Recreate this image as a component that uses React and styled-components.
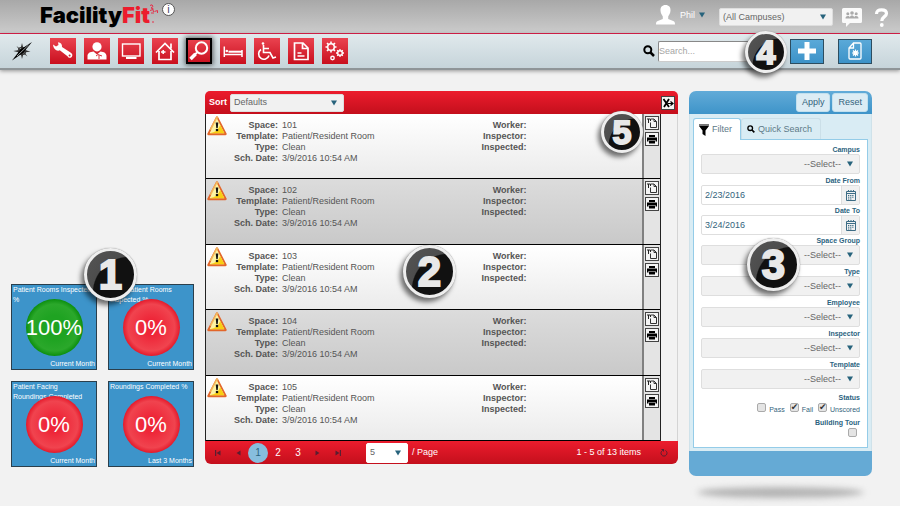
import styled, { createGlobalStyle, css } from 'styled-components';

const navItems = [
  'wrench',
  'person',
  'monitor',
  'house',
  'magnifier',
  'bed',
  'wheelchair',
  'report',
  'gears',
];

const tiles = [
  { title: 'Patient Rooms Inspected %', value: '100%', period: 'Current Month', good: true },
  { title: 'EVS Patient Rooms Inspected %', value: '0%', period: 'Current Month' },
  { title: 'Patient Facing\nRoundings Completed', value: '0%', period: 'Current Month' },
  { title: 'Roundings Completed %', value: '0%', period: 'Last 3 Months' },
];

const spaces = ['101', '102', '103', '104', '105'];

const filters = [
  { id: 'campus', label: 'Campus' },
  { id: 'from', label: 'Date From', date: '2/23/2016' },
  { id: 'to', label: 'Date To', date: '3/24/2016' },
  { id: 'group', label: 'Space Group' },
  { id: 'type', label: 'Type' },
  { id: 'employee', label: 'Employee' },
  { id: 'inspector', label: 'Inspector' },
  { id: 'template', label: 'Template' },
];

const navGlyphs = {
  wrench: (
    <g fill='#fff'>
      <path d='M3 6.5 6 8.5 8.5 7 8 4.3C11 4.6 12.3 6.6 12 9L20.5 14.5C23.5 16 22.6 20 19.5 19.8 18.5 19.7 18 19 17.5 18.2L9.8 12.3C7 13.6 3.5 11.5 3 6.5Z' />
      <circle cx='19.6' cy='17.4' r='1' fill='#d02634' />
    </g>
  ),
  person: (
    <g fill='#fff'>
      <circle cx='13' cy='8.8' r='4.6' />
      <path d='M3.5 21.5V18c0-3 2.5-4.4 6-4.6l3.5 3 3.5-3c3.5.2 6 1.6 6 4.6v3.5Z' />
      <path d='M12 18l2-1.5 4 1.5M15 17v4' stroke='#d8303d' fill='none' />
    </g>
  ),
  monitor: (
    <g fill='none' stroke='#fff' strokeWidth='1.4'>
      <rect x='4.5' y='6' width='17.5' height='12' />
      <path d='M8 20h10.5' strokeWidth='2' />
    </g>
  ),
  house: (
    <g fill='none' stroke='#fff' strokeWidth='1.7'>
      <path d='M4 14.5 13 5.5l9 9M19 10.5V5.5M7 13v8.5h12V13' />
      <path d='M9 14h4.5M11.2 12v4' strokeWidth='1.5' />
    </g>
  ),
  magnifier: (
    <g fill='none' stroke='#fff'>
      <circle cx='15.5' cy='10' r='5.7' strokeWidth='2' />
      <path d='M11 14.5 8.5 17' strokeWidth='2' />
      <path d='M9.5 16 4.5 21' strokeWidth='3.5' />
    </g>
  ),
  bed: (
    <g fill='none' stroke='#fff' strokeWidth='1.5'>
      <path d='M4.3 8.5v10.5M22 12v7M4 16.5h18' />
      <path d='M8.5 13.7H22' strokeWidth='2' />
      <circle cx='6.8' cy='13' r='1.3' fill='#fff' stroke='none' />
    </g>
  ),
  wheelchair: (
    <g fill='none' stroke='#fff' strokeWidth='1.6'>
      <circle cx='9' cy='5.5' r='1.3' fill='#fff' stroke='none' />
      <path d='M9.5 7v7.5h6.5l3 5.5 3-1M10 10.5h5' />
      <path d='M7 11.5a5.3 5.3 0 1 0 8 6' />
    </g>
  ),
  report: (
    <g fill='none' stroke='#fff' strokeWidth='1.7'>
      <path d='M6.5 5H15l5 5v11.5H6.5ZM14.5 5v5.5H20' />
      <path d='M9.5 15h4M9.5 18h7' />
    </g>
  ),
  gears: (
    <g fill='none' stroke='#fff'>
      <circle cx='9' cy='9' r='3.3' strokeWidth='1.5' />
      <circle cx='18' cy='15' r='2.3' strokeWidth='1.4' />
      <circle cx='10.5' cy='20' r='1.7' strokeWidth='1.4' />
      <path
        d='M9 3.5v2M9 12.5v2M3.5 9h2M12.5 9h2M5 5l1.5 1.5M13 5l-1.5 1.5M5 13l1.5-1.5M13 13l-1.5-1.5'
        strokeWidth='1.6'
      />
      <path
        d='M18 11v1.5M18 17.5V19M14 15h1.5M20.5 15H22M15.2 12.2l1 1M20.8 12.2l-1 1M15.2 17.8l1-1M20.8 17.8l-1-1'
        strokeWidth='1.3'
      />
    </g>
  ),
};

function Caret() {
  return (
    <svg width='6' height='6' viewBox='0 0 6 6' aria-hidden='true'>
      <path d='M0 .5h6L3 5.5Z' fill='#27637c' />
    </svg>
  );
}

function SearchGlyph({ size }) {
  return (
    <svg width={size} height={size} viewBox='0 0 12 12' aria-hidden='true'>
      <circle cx='4.8' cy='4.8' r='3.5' fill='none' stroke='#000' strokeWidth='2' />
      <path d='M7.5 7.5 11 11' stroke='#000' strokeWidth='2.5' />
    </svg>
  );
}

function WarningIcon() {
  return (
    <svg width='20' height='20' viewBox='0 0 20 20' aria-label='Warning'>
      <path
        d='M10 1.5 18.5 18H1.5Z'
        fill='#fbe36a'
        stroke='#e2662a'
        strokeWidth='2.4'
        strokeLinejoin='round'
      />
      <path d='M10 1.5 4 13' stroke='#f3b65a' strokeWidth='2' strokeLinecap='round' />
      <path d='M10 2.6 17.4 17.2H2.6Z' fill='#fdf3a2' />
      <path d='M13.2 9 17.4 17.2H2.6Q11 16 13.2 9Z' fill='#f8cf12' />
      <path d='M8.7 6.5h2.6l-.6 5.5H9.3Z' fill='#111' />
      <circle cx='10' cy='14' r='1.3' fill='#111' />
    </svg>
  );
}

function PagerGlyph({ kind }) {
  const back = kind === 'first' || kind === 'prev';
  const bar = kind === 'first' || kind === 'last';
  return (
    <svg width='6' height='6' viewBox='0 0 6 6' aria-hidden='true'>
      <g transform={back ? 'rotate(180 3 3)' : undefined} fill='#5a1f31'>
        <path d='M.5.5 4.5 3 .5 5.5Z' />
        {bar && <path d='M4.8 0H6v6H4.8Z' />}
      </g>
    </svg>
  );
}

function Select({ id, label, children, ...rest }) {
  return (
    <SelectBox {...rest}>
      <select id={id} aria-label={label}>
        <option>{children}</option>
      </select>
      <Caret />
    </SelectBox>
  );
}

function AppHeader() {
  return (
    <TopBar>
      <Logo>
        Facility<span>Fit</span>
        <svg width='8' height='20' viewBox='0 0 8 20' aria-hidden='true'>
          <path
            d='M0 1.5 2 .8 3 2.5 1 4 3.5 5M0 6.5 3 5.5 3.5 8M4.5 7.5 7.5 6.5 7.5 9M1 9h3M2 18h2'
            fill='none'
            stroke='#e5304a'
          />
        </svg>
      </Logo>
      <InfoButton type='button'>i</InfoButton>
      <UserButton type='button'>
        <svg width='19' height='20' viewBox='0 0 19 20' aria-hidden='true'>
          <path
            fill='#fff'
            d='M9.5 0C13 0 14.7 2.3 14.5 5.5 14.4 8.5 13 10 12.2 11.5V14l5 2c1.5.7 1.8 1.7 1.8 3.5H0c0-1.8.3-2.8 1.8-3.5l5-2v-2.5C6 10 4.6 8.5 4.5 5.5 4.3 2.3 6 0 9.5 0Z'
          />
        </svg>
        Phil
        <Caret />
      </UserButton>
      <Select label='Campus' $width='114px'>
        (All Campuses)
      </Select>
      <IconLink href='#chat' aria-label='Messages'>
        <svg width='20' height='19' viewBox='0 0 20 19'>
          <path
            d='M1.5 0h17A1.5 1.5 0 0 1 20 1.5v12a1.5 1.5 0 0 1-1.5 1.5H8l-4 4V15H1.5A1.5 1.5 0 0 1 0 13.5v-12A1.5 1.5 0 0 1 1.5 0Z'
            fill='#fafafa'
          />
          <g fill='#aaa'>
            <circle cx='5.8' cy='5.8' r='1.5' />
            <circle cx='10' cy='5' r='1.8' />
            <circle cx='14.2' cy='5.8' r='1.5' />
            <path d='M3.5 10.5c0-3 4-3 4.3-1 .6-2.6 3.8-2.6 4.4 0 .3-2 4.3-2 4.3 1Z' />
          </g>
        </svg>
      </IconLink>
      <IconLink href='#help' aria-label='Help'>
        <svg width='15' height='19' viewBox='0 0 15 19'>
          <path
            d='M2.5 6C2.5 3 4.5 1.8 7.5 1.8S12.5 3.2 12.5 5.5C12.5 8.8 7.8 8.6 7.8 13'
            fill='none'
            stroke='#fff'
            strokeWidth='3.2'
          />
          <circle cx='7.8' cy='17' r='1.9' fill='#fff' />
        </svg>
      </IconLink>
    </TopBar>
  );
}

function ActionBar() {
  return (
    <Toolbar>
      <Compass href='#home' aria-label='Navigator'>
        <svg width='20' height='20' viewBox='0 0 20 20'>
          <circle cx='10' cy='10' r='4' fill='none' stroke='#444' />
          <path
            d='M10 2l1.5 6 4-3.5L12.5 9l6 1.5-6 1 3 4-4-3L10 18l-1.2-5.5-4 2.5 2.5-3.5-6-1.5 6-1L4.5 5l4 3Z'
            fill='#333'
          />
          <path d='M20 1 11.5 11.5 0 19.5 8.5 8.5Z' fill='#000' />
          <path d='M16.5 4 5 15' stroke='#dce4e8' strokeWidth='.7' />
        </svg>
      </Compass>
      <Nav>
        {navItems.map((name) => (
          <NavButton key={name} type='button' aria-label={name} $active={name === 'magnifier'}>
            <svg width='26' height='26' viewBox='0 0 26 26'>
              {navGlyphs[name]}
            </svg>
          </NavButton>
        ))}
      </Nav>
      <Search>
        <SearchGlyph size={12} />
        <input type='text' placeholder='Search...' aria-label='Search' />
      </Search>
      <BlueButton type='button' aria-label='Add'>
        <svg width='18' height='18' viewBox='0 0 18 18'>
          <path d='M9 0v18M0 9h18' stroke='#fff' strokeWidth='5' />
        </svg>
      </BlueButton>
      <BlueButton type='button' aria-label='Report settings'>
        <svg width='14' height='18' viewBox='0 0 14 18'>
          <path
            d='M5.5 1H12q1 0 1 1v14q0 1-1 1H2q-1 0-1-1V6ZM5.5 1v5H1'
            fill='none'
            stroke='#fff'
            strokeWidth='1.3'
          />
          <circle cx='7.5' cy='11' r='2.3' fill='#fff' />
          <path d='M7.5 7.5v7M4 11h7M5 8.5l5 5M10 8.5l-5 5' stroke='#fff' strokeWidth='1.2' />
        </svg>
      </BlueButton>
      <Badge $small $left='745px' $top='-3px'>
        4
      </Badge>
    </Toolbar>
  );
}

function TileBoard() {
  return (
    <Tiles>
      {tiles.map((tile) => (
        <Tile key={tile.title}>
          <TileTitle>{tile.title}</TileTitle>
          <Gauge $good={tile.good}>{tile.value}</Gauge>
          <Period>{tile.period}</Period>
        </Tile>
      ))}
      <Badge $left='73px' $top='157px'>
        1
      </Badge>
    </Tiles>
  );
}

function SpaceRow({ space }) {
  return (
    <Row>
      <WarningIcon />
      <Details>
        <dt>Space:</dt>
        <dd>{space}</dd>
        <dt>Template:</dt>
        <dd>Patient/Resident Room</dd>
        <dt>Type:</dt>
        <dd>Clean</dd>
        <dt>Sch. Date:</dt>
        <dd>3/9/2016 10:54 AM</dd>
      </Details>
      <Details>
        <dt>Worker:</dt>
        <dd />
        <dt>Inspector:</dt>
        <dd />
        <dt>Inspected:</dt>
        <dd />
      </Details>
      <Actions>
        <MiniButton type='button' aria-label='Open inspection'>
          <svg width='12' height='12' viewBox='0 0 12 12'>
            <path d='M5 2h3l2.5 2.5V10.5H4.5V5.5M8 2v2.5h2.5' fill='none' stroke='#333' />
            <path d='M1 2h3.5v2M2.5 2v4' fill='none' stroke='#222' />
          </svg>
        </MiniButton>
        <MiniButton type='button' aria-label='Print'>
          <svg width='12' height='12' viewBox='0 0 12 12'>
            <path d='M3 2h6v2H3ZM1 4.5h10v4H9.5V7h-7v1.5H1ZM3 7.5h6v3H3Z' fill='#000' />
          </svg>
        </MiniButton>
      </Actions>
    </Row>
  );
}

function Inspections() {
  return (
    <Panel>
      <PanelHead>
        <label htmlFor='sort'>Sort</label>
        <Select id='sort' $width='114px'>
          Defaults
        </Select>
        <MiniButton type='button' aria-label='Export to Excel' $end>
          <svg width='12' height='12' viewBox='0 0 12 12'>
            <path d='M1.5 2 7 10M7 2 2 10' stroke='#000' strokeWidth='1.8' />
            <path
              d='M5.5 6.5h5M8.5 4.5l2.5 2-2.5 2'
              stroke='#000'
              strokeWidth='1.2'
              fill='none'
            />
          </svg>
        </MiniButton>
      </PanelHead>
      <Scroller>
        <Rows>
          {spaces.map((space) => (
            <SpaceRow key={space} space={space} />
          ))}
        </Rows>
      </Scroller>
      <Pager>
        <Page type='button' aria-label='First page'>
          <PagerGlyph kind='first' />
        </Page>
        <Page type='button' aria-label='Previous page'>
          <PagerGlyph kind='prev' />
        </Page>
        <Page type='button' $current>
          1
        </Page>
        <Page type='button'>2</Page>
        <Page type='button'>3</Page>
        <Page type='button' aria-label='Next page'>
          <PagerGlyph kind='next' />
        </Page>
        <Page type='button' aria-label='Last page'>
          <PagerGlyph kind='last' />
        </Page>
        <PageSize>
          <Select id='size' $width='42px' $tall $plain>
            5
          </Select>
          <label htmlFor='size'>/ Page</label>
        </PageSize>
        <Count>1 - 5 of 13 items</Count>
        <Refresh type='button' aria-label='Refresh'>
          <svg width='8' height='8' viewBox='0 0 8 8'>
            <path d='M5.5 1.5a3 3 0 1 1-3 0' fill='none' stroke='#5a1f31' />
            <path d='M1 0h3v3Z' fill='#5a1f31' />
          </svg>
        </Refresh>
      </Pager>
      <Badge $left='198px' $top='154px'>
        2
      </Badge>
      <Badge $small $left='396px' $top='20px'>
        5
      </Badge>
    </Panel>
  );
}

function FilterPanel() {
  return (
    <Side>
      <FilterBox>
        <FilterHead>
          <button type='button'>Apply</button>
          <button type='reset'>Reset</button>
        </FilterHead>
        <FilterBody>
          <Tabs>
            <Tab type='button' $active>
              <svg width='10' height='12' viewBox='0 0 10 12' aria-hidden='true'>
                <path d='M0 0h10v2L6.5 6.5V12l-3-2V6.5L0 2Z' fill='#000' />
                <path d='M0 1h10' stroke='#777' strokeWidth='2' />
              </svg>
              Filter
            </Tab>
            <Tab type='button'>
              <SearchGlyph size={8} />
              Quick Search
            </Tab>
          </Tabs>
          <Fields>
            {filters.map(({ id, label, date }) => (
              <Field key={id} $date={date}>
                <label htmlFor={id}>{label}</label>
                {date ? (
                  <DateBox>
                    <input id={id} type='text' defaultValue={date} />
                    <button type='button' aria-label={`Pick ${label}`}>
                      <svg width='10' height='11' viewBox='0 0 10 11'>
                        <path d='M.5 1.5h9v9h-9ZM.5 3.5h9' fill='none' stroke='#3c6c85' />
                        <path d='M2.5 0v2M5 0v2M7.5 0v2' stroke='#3c6c85' />
                        <path
                          d='M2 5.5h6M2 7.2h6M2 9h4'
                          stroke='#3c6c85'
                          strokeDasharray='1.3 .8'
                        />
                      </svg>
                    </button>
                  </DateBox>
                ) : (
                  <Select id={id} $width='100%' $tall $right>
                    --Select--
                  </Select>
                )}
              </Field>
            ))}
            <Legend>Status</Legend>
            <Checks>
              <label>
                <input type='checkbox' /> Pass
              </label>
              <label>
                <input type='checkbox' defaultChecked /> Fail
              </label>
              <label>
                <input type='checkbox' defaultChecked /> Unscored
              </label>
            </Checks>
            <Legend as='label' htmlFor='tour'>
              Building Tour
            </Legend>
            <Checks $single>
              <input id='tour' type='checkbox' />
            </Checks>
          </Fields>
        </FilterBody>
        <FilterFoot />
      </FilterBox>
      <GroundShadow />
      <Badge $left='58px' $top='147px'>
        3
      </Badge>
    </Side>
  );
}

function App() {
  return (
    <>
      <GlobalStyle />
      <AppHeader />
      <ActionBar />
      <Main>
        <TileBoard />
        <Inspections />
        <FilterPanel />
      </Main>
    </>
  );
}

// -------------------------------------------------- styling ----------------------------------------------
const GlobalStyle = createGlobalStyle`
  * {
    box-sizing: border-box;
  }

  body {
    margin: 0;
    min-height: 100vh;
    background-color: #f2f2f2;
    color: #555;
    font: 9px/11px 'Liberation Sans', Arial, sans-serif;
  }

  button,
  input,
  select {
    margin: 0;
    padding: 0;
    border: 0;
    outline: 0;
    background: none;
    color: inherit;
    font: inherit;
  }

  svg {
    display: block;
    flex: none;
  }

  ul,
  dl,
  dd {
    margin: 0;
    padding: 0;
    list-style: none;
  }
`;

const redGradient = css`
  background-image: linear-gradient(#ec1c2d, #c40f1c);
`;

const SelectBox = styled.div`
  display: flex;
  align-items: center;
  width: ${({ $width }) => $width};
  height: ${({ $tall }) => ($tall ? '20px' : '18px')};
  padding: 0 6px 0 3px;
  border: 1px solid ${({ $plain }) => ($plain ? '#fff' : '#dedede')};
  border-radius: 2px;
  background-color: ${({ $plain }) => ($plain ? '#fff' : '#f1f1f1')};

  select {
    flex: 1;
    min-width: 0;
    height: 100%;
    margin-right: ${({ $right }) => ($right ? '6px' : 0)};
    appearance: none;
    color: #666;
    text-align-last: ${({ $right }) => ($right ? 'right' : 'left')};
  }
`;

const TopBar = styled.header`
  display: flex;
  align-items: flex-start;
  height: 34px;
  padding: 0 11px 0 40px;
  border-bottom: 1px solid #e0204c;
  background-image: linear-gradient(#a8a8a8, #cbcbcb);

  > * {
    flex: none;
  }

  ${SelectBox} {
    margin-top: 8px;
  }
`;

const Logo = styled.div`
  display: flex;
  color: #000;
  font: 900 22px/30px Inter, sans-serif;

  span {
    color: #ec1c2d;
  }

  svg {
    margin-top: 4px;
  }
`;

const InfoButton = styled.button`
  width: 13px;
  height: 13px;
  margin: 3px auto 0 4px;
  border: 1px solid #555;
  border-radius: 50%;
  background-color: #fff;
  color: #446;
  font: 11px/11px 'Liberation Sans', sans-serif;
`;

const UserButton = styled.button`
  display: flex;
  align-items: flex-start;
  margin: 5px 14px 0 0;
  color: #fff;
  line-height: 20px;

  svg:first-child {
    margin-right: 5px;
  }

  svg:last-child {
    margin: 7px 0 0 4px;
  }
`;

const IconLink = styled.a`
  margin: 8px 0 0 9px;

  & + & {
    margin-left: 12px;
  }
`;

const Toolbar = styled.div`
  position: relative;
  display: flex;
  align-items: center;
  height: 36px;
  padding: 0 28px 0 12px;
  border-bottom: 2px solid #8f9598;
  background-image: linear-gradient(#e0e9ec, #c6d4da);
  box-shadow: 0 1px 4px rgba(0, 0, 0, 0.4);
`;

const Compass = styled.a`
  margin-right: 18px;
`;

const Nav = styled.nav`
  display: flex;
  gap: 8px;
  margin-right: auto;
`;

const NavButton = styled.button`
  width: 26px;
  height: 26px;
  background-image: linear-gradient(#ea4350, #c90f1e);
  ${({ $active }) =>
    $active &&
    css`
      outline: 2px solid #000;
      outline-offset: -2px;
      box-shadow: 0 0 5px 1px rgba(0, 0, 0, 0.6);
    `}
`;

const Search = styled.div`
  display: flex;
  align-items: center;
  gap: 3px;
  margin-right: 32px;

  input {
    width: 100px;
    height: 21px;
    border: 1px solid #ccc;
    border-top-color: #888;
    border-left-color: #888;
    border-radius: 2px;
    background-color: #fff;
  }

  input::placeholder {
    color: #a5a5a5;
    opacity: 1;
  }
`;

const BlueButton = styled.button`
  display: flex;
  align-items: center;
  justify-content: center;
  width: 34px;
  height: 25px;
  border: 1px solid #2c4d60;
  background-image: linear-gradient(#5aa9d8, #3c92c8);

  & + & {
    margin-left: 14px;
  }
`;

/* Numbered callouts sit over whatever they point at. */
const Badge = styled.span`
  position: absolute;
  left: ${({ $left }) => $left};
  top: ${({ $top }) => $top};
  z-index: 2;
  display: flex;
  align-items: center;
  justify-content: center;
  width: ${({ $small }) => ($small ? '42px' : '53px')};
  height: ${({ $small }) => ($small ? '42px' : '53px')};
  border: 3px solid #eee;
  border-radius: 50%;
  background-color: #1a1a1a;
  background-image: radial-gradient(circle at 90% 90%, #111 60%, #4d4d4d 62%, #555);
  box-shadow: 0 0 1px #777, -3px 4px 5px rgba(0, 0, 0, 0.55);
  color: #e8e8e8;
  font-size: ${({ $small }) => ($small ? '34px' : '42px')};
  font-weight: bold;
  line-height: 1;
  -webkit-text-stroke: 2px #e8e8e8;
`;

const Main = styled.main`
  display: grid;
  grid-template-columns: 183px 1fr 183px;
  align-items: start;
  gap: 11px;
  padding: 21px 28px 0 11px;
`;

const Tiles = styled.section`
  position: relative;
  display: grid;
  grid-template-columns: 86px 86px;
  gap: 11px;
  padding-top: 193px;
`;

const Tile = styled.article`
  display: grid;
  grid-template-rows: 14px 57px 13px;
  justify-items: center;
  border: 1px solid #2b3f4c;
  background-color: #3d94ca;
  color: #fff;
  font-size: 7px;
  line-height: 10px;
`;

const TileTitle = styled.div`
  width: 100%;
  padding-left: 1px;
  white-space: pre-line;
`;

const Gauge = styled.div`
  z-index: 1;
  display: flex;
  align-items: center;
  justify-content: center;
  width: 57px;
  height: 57px;
  border-radius: 50%;
  background-image: ${({ $good }) =>
    $good
      ? 'radial-gradient(circle, #1fa322 30%, #2ba82b 58%, #0e9010 70%)'
      : 'radial-gradient(circle, #ee2638 20%, #f0444f 58%, #e51c2d 70%)'};
  font-size: 22px;
`;

const Period = styled.div`
  width: 100%;
  padding: 3px 1px 0 0;
  text-align: right;
`;

const Panel = styled.section`
  position: relative;
`;

const PanelHead = styled.div`
  ${redGradient}
  display: flex;
  align-items: center;
  height: 23px;
  padding: 0 3px 0 4px;
  border-radius: 5px 5px 0 0;
  color: #fff;

  label {
    margin-right: 3px;
    font-weight: bold;
  }
`;

const Scroller = styled.div`
  padding-right: 16px;
  border-right: 1px solid #d4d4d4;
`;

const Rows = styled.ul`
  display: grid;
  grid-auto-rows: 1fr;
  min-height: 327px;
  border: solid #222;
  border-width: 0 1px;
`;

const Row = styled.li`
  display: grid;
  grid-template-columns: 20px 1fr 1fr 18px;
  padding-left: 1px;
  border-bottom: 1px solid #000;
  background-image: linear-gradient(#fff, #ebebeb);

  &:nth-child(even) {
    background-image: linear-gradient(#dcdcdc, #c9c9c9);
  }

  > svg {
    margin-top: 2px;
  }
`;

const Details = styled.dl`
  display: grid;
  grid-template-columns: 51px 1fr;
  align-content: start;
  column-gap: 4px;
  padding-top: 6px;

  & + & {
    padding-left: 41px;
  }

  dt {
    font-weight: bold;
    text-align: right;
  }
`;

const Actions = styled.div`
  display: flex;
  flex-direction: column;
  gap: 2px;
  padding: 2px 1px;
  border-left: 2px solid #808080;
  background-color: #e4e4e4;
`;

const MiniButton = styled.button`
  width: 14px;
  height: 14px;
  margin-left: ${({ $end }) => ($end ? 'auto' : 0)};
  border: 1px solid #444;
  background-color: #f4f4f4;
`;

const Pager = styled.footer`
  ${redGradient}
  display: flex;
  align-items: center;
  height: 23px;
  padding: 0 10px 0 3px;
  border-radius: 0 0 6px 6px;
  color: #fff;
`;

const Page = styled.button`
  display: flex;
  align-items: center;
  justify-content: center;
  width: 20px;
  height: 20px;
  border-radius: 50%;
  background-color: ${({ $current }) => ($current ? '#87bede' : 'transparent')};
  color: ${({ $current }) => ($current ? '#2c6380' : '#fff')};
  font-size: 10px;
`;

const PageSize = styled.div`
  display: flex;
  align-items: center;
  gap: 4px;
  margin-left: 18px;
`;

const Count = styled.span`
  margin: 0 19px 0 auto;
`;

const Refresh = styled.button`
  width: 8px;
  height: 8px;
`;

const Side = styled.aside`
  position: relative;
`;

const FilterBox = styled.form`
  overflow: hidden;
  border-radius: 7px;
`;

const FilterHead = styled.div`
  display: flex;
  align-items: center;
  justify-content: flex-end;
  gap: 2px;
  height: 23px;
  padding-right: 4px;
  background-image: linear-gradient(#62abd8, #3e94c9);

  button {
    height: 19px;
    padding: 0 5px;
    border: 1px solid #c2e0ee;
    border-radius: 3px;
    background-color: #dcecf4;
    color: #33637c;
  }
`;

const FilterBody = styled.div`
  padding: 4px 3px 3px;
  border: solid #cfe2ea;
  border-width: 0 1px;
  background-color: #d9ecf4;
`;

const Tabs = styled.div`
  display: flex;
  height: 21px;
`;

const Tab = styled.button`
  display: flex;
  align-items: center;
  gap: 3px;
  padding: 0 8px 0 5px;
  border: 1px solid #cbdfe8;
  border-bottom: 0;
  border-radius: 3px 3px 0 0;
  color: #5d7a88;
  ${({ $active }) =>
    $active &&
    css`
      z-index: 1;
      margin-bottom: -1px;
      border-color: #94cce8;
      background-color: #fff;
    `}
`;

const Fields = styled.div`
  padding: 5px 7px 6px;
  border: 1px solid #94cce8;
  background-color: #fff;
`;

const Field = styled.div`
  margin-bottom: ${({ $date }) => ($date ? '1px' : '2px')};

  label {
    display: block;
    color: #2c6380;
    font-size: 7px;
    font-weight: bold;
    line-height: 9px;
    text-align: right;
  }
`;

const DateBox = styled.div`
  display: flex;
  height: 20px;
  border: 1px solid #dedede;
  border-radius: 2px;
  color: #33637c;

  input {
    flex: 1;
    min-width: 0;
    padding-left: 3px;
  }

  button {
    display: flex;
    align-items: center;
    justify-content: center;
    width: 18px;
    border-left: 1px solid #dedede;
    background-color: #f1f1f1;
  }
`;

const Legend = styled.div`
  display: block;
  padding-top: 2px;
  color: #2c6380;
  font-size: 7px;
  font-weight: bold;
  line-height: 9px;
  text-align: right;
`;

const Checks = styled.div`
  display: flex;
  justify-content: flex-end;
  gap: 5px;
  height: 14px;
  padding: 1px ${({ $single }) => ($single ? '3px' : 0)} 0 0;
  color: #33637c;
  font-size: 7px;
  line-height: 13px;

  label {
    display: flex;
    gap: 3px;
  }

  input {
    width: 9px;
    height: 9px;
    appearance: none;
    border: 1px solid #aaa;
    border-radius: 2px;
    background-color: #e4e4e4;
  }

  input:checked::after {
    content: '✔';
    display: block;
    color: #333;
    font: 9px/7px 'DejaVu Sans', sans-serif;
  }
`;

const FilterFoot = styled.div`
  height: 25px;
  background-color: #65aad5;
`;

const GroundShadow = styled.div`
  height: 11px;
  margin: 11px 8px 0;
  border-radius: 50%;
  background-color: #b4b4b4;
  filter: blur(3px);
`;

export default App;
